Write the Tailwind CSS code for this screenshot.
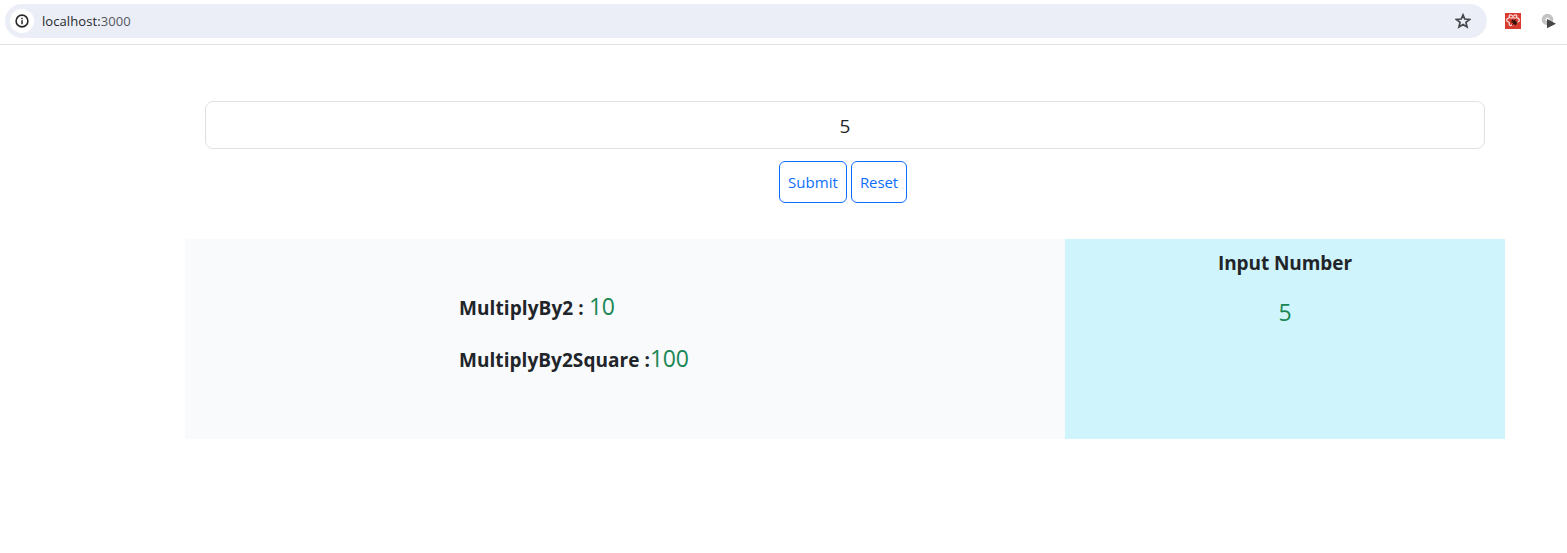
<!DOCTYPE html>
<html lang="en">
<head>
<meta charset="utf-8">
<title>localhost:3000</title>
<script src="https://cdn.jsdelivr.net/npm/@tailwindcss/browser@4"></script>
</head>
<body class="bg-white text-[#212529] font-['Open_Sans','Noto_Sans',sans-serif] h-[553px] overflow-hidden">
<header class="flex h-[45px] items-start border-b border-[#dfe0e2] pl-[5px] pt-1">
  <div class="flex h-[34px] w-[1482px] items-center rounded-full bg-[#ebeef7] pl-[5px] pr-4">
    <span class="flex size-6 items-center justify-center rounded-full bg-white">
      <svg class="size-4" viewBox="0 0 16 16" fill="none" stroke="#27282b"><circle cx="8" cy="8" r="5.9" stroke-width="1.6"/><path d="M8 7.3v3.9M8 4.8v1.5" stroke-width="1.5"/></svg>
    </span>
    <span class="ml-2 text-[13px] leading-5 tracking-[0.08px] text-[#27282b]">localhost:<span class="text-[#55585d]">3000</span></span>
    <svg class="ml-auto size-4" viewBox="0 0 16 16" fill="none" stroke="#45474b" stroke-width="1.7"><path d="M8 1.9l1.75 4.15 4.9.4-3.7 2.95 1.12 4.6L8 11.55 3.93 14l1.12-4.6-3.7-2.95 4.9-.4z"/></svg>
  </div>
  <svg class="ml-[18px] mt-[9px] size-4" viewBox="0 0 16 16"><path fill="#d83b2f" d="M0 0h16v16H0z"/><g fill="none" stroke="#f9dfdc" stroke-width="1.3"><path d="M3.8 5C1 5.6.8 8.4 3.8 9.2M12.2 5c2.8.6 3 3.4 0 4.2M4.8 5.2C3.2 2 5.3.6 8 3.4c2.7-2.8 4.8-1.4 3.2 1.8M4.5 9c-1.2 3 .4 4.5 2.6 2.8M5.5 5.3c1.5-.8 3.5-.8 5 0"/></g><g stroke="#32110e" fill="#32110e"><ellipse cx="9.6" cy="9.6" rx="1.5" ry="2.5" stroke-width=".6" transform="rotate(-38 9.6 9.6)"/><circle cx="7.3" cy="7.3" r=".6" stroke-width=".5"/><path d="M5.5 9h3M10.5 6l-.8 2M7 12l2-2M12.8 8.5l-3 1" stroke-width=".7"/></g></svg>
  <svg class="ml-5 mt-[9px] size-4" viewBox="0 0 16 16"><circle cx="6.5" cy="6.5" r="5.8" fill="#c3c3c3"/><circle cx="6.5" cy="6.5" r="2" fill="#f3f3f3"/><path d="M6 6l9 4.7-9 4.6z" fill="#474747"/></svg>
</header>
<main class="ml-[185px] w-[1320px]">
  <div class="mx-5 mt-14 flex h-12 items-center justify-center rounded-lg border border-[#dee2e6] text-[19px]"><span class="mt-0.5">5</span></div>
  <div class="mt-3 flex justify-center gap-1 pr-1 text-[15px] text-[#0d6efd]">
    <button class="h-[42px] w-[68px] rounded-md border border-[#0d6efd] pt-px tracking-[0.05px]">Submit</button>
    <button class="h-[42px] w-14 rounded-md border border-[#0d6efd] pt-px tracking-[-0.1px]">Reset</button>
  </div>
  <section class="mt-9 flex h-[200px]">
    <div class="w-[880px] bg-[#f8fafc] pl-[274px] pt-[49px]">
      <p class="h-9 leading-9 whitespace-pre"><b class="text-[19px] tracking-[0.09px]">MultiplyBy2 : </b><span class="text-[23px] tracking-[-0.3px] text-[#198754]">10</span></p>
      <p class="mt-4 h-9 leading-9 whitespace-pre"><b class="text-[19px] tracking-[0.05px]">MultiplyBy2Square :</b><span class="text-[23px] tracking-[-0.3px] text-[#198754]">100</span></p>
    </div>
    <div class="w-[440px] bg-[#cff4fc] pt-[9px] text-center">
      <p class="text-[19px] font-bold leading-[30px] tracking-[-0.08px]">Input Number</p>
      <p class="mt-4 text-[23px] leading-9 text-[#198754]">5</p>
    </div>
  </section>
</main>
</body>
</html>
